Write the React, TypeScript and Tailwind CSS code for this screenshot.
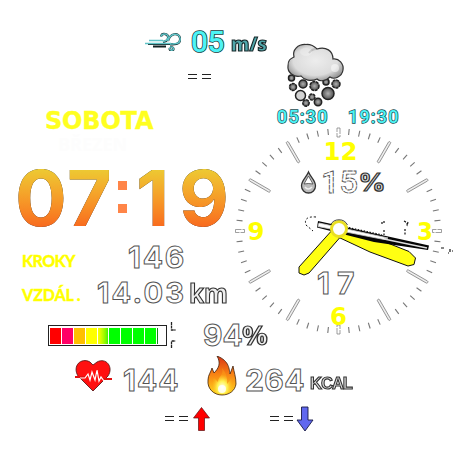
import React from "react";

const CX = 338.5;
const CY = 231;

const outline = "font-['Inter',sans-serif] font-bold text-white [-webkit-text-stroke:1px_#555]";
const lcd = "font-['Roboto',sans-serif] font-medium text-[#4df3f5] [paint-order:stroke]";

function WindIcon() {
  return (
    <svg className="h-[20px] w-[36px]" viewBox="145 31 36 20" fill="none">
      <g stroke="#102022" strokeWidth="2.2">
        <path d="M148 44H173M153 46.500H166" />
        <path d="M161 36.500c1-4 8-3 7 2q-1 3-5 3.500M168 41c2-8 11-9 12-3c1 6-4 6.500-10 6.500M170 47c5 0 4 4 1 3.500q-2-1-1-2.500" />
      </g>
      <g stroke="#5fc3c7" strokeWidth="1.5">
        <path d="M149 40.500H163M145 43.500H171" />
        <path d="M161 36.500c1-4 8-3 7 1.500q-1 3-5 3.500M168 41c2-8 11-9 12-3c1 6-4 6-10 6M170 47c5 0 4 4 1 3q-2-1-1-2" />
      </g>
    </svg>
  );
}

const hail = [
  [291.5, 78, 3], [293, 87, 3.5], [303, 84, 4], [314.5, 86, 4.5], [326, 82, 3], [336, 84, 4],
  [300.5, 95.5, 5], [312, 97, 3], [328, 93.5, 6], [306, 103, 3.2], [318, 102, 3.7],
];

function CloudIcon() {
  return (
    <svg className="h-[66px] w-[60px]" viewBox="286 42 60 66">
      <defs>
        <radialGradient id="cloud" cx="50%" cy="45%" r="62%">
          <stop offset="0" stopColor="#ededed" />
          <stop offset=".65" stopColor="#dcdcdc" />
          <stop offset="1" stopColor="#858585" />
        </radialGradient>
        <radialGradient id="hail">
          <stop offset="0" stopColor="#b0b0b0" />
          <stop offset="1" stopColor="#505050" />
        </radialGradient>
      </defs>
      {hail.map(([x, y, r], i) => (
        <circle key={i} cx={x} cy={y} r={r} fill={i === 6 ? "#d2d2d2" : "url(#hail)"} stroke="#222" strokeWidth="1.5" strokeDasharray={i % 2 ? "3 .7" : undefined} />
      ))}
      <path d="M294 57C292 50 298 44 306 44.500C312 44 315 47 317 49C326 46 333 51 333 59C339 58 344 64 343 70C342 77 334 80 330 77C326 81 320 82 317 79C311 82 304 80 301 76C294 78 287 72 288 66C288 60 290 59 294 57Z" fill="url(#cloud)" stroke="#333" strokeWidth="1.2" />
      <path d="M309 53q3-4 7-4" fill="none" stroke="#999" strokeWidth="2" opacity=".5" />
      <ellipse cx="335" cy="68" rx="4" ry="4" fill="#fff" opacity=".5" />
      <ellipse cx="306" cy="52" rx="6" ry="4" fill="#fff" opacity=".25" />
    </svg>
  );
}

function Dial() {
  return (
    <svg className="h-[216px] w-[222px] overflow-visible" viewBox="232 124 222 216">
      {Array.from({ length: 60 }, (_, i) => {
        const turn = `rotate(${i * 6} ${CX} ${CY})`;
        if (i % 15 === 0)
          return <rect key={i} x={CX - 1.5} y={CY - 103} width="3" height="9" fill="#fff" stroke="#777" strokeWidth=".7" strokeDasharray="9 1" transform={turn} />;
        if (i % 5 === 0)
          return <rect key={i} x={CX - 1.2} y={CY - 103} width="2.4" height="24" rx="1" fill="#eee" stroke="#888" strokeWidth=".8" transform={turn} />;
        return <path key={i} d={`M${CX} ${CY - 102.5}v6`} stroke="#777" strokeWidth="1.1" transform={turn} />;
      })}
      <g className="font-['DejaVu_Sans',sans-serif] font-bold" fill="#ffff00" fontSize="25">
        <text x="323.5" y="160" textLength="34" lengthAdjust="spacingAndGlyphs">12</text>
        <text x="417" y="240" textLength="16" lengthAdjust="spacingAndGlyphs">3</text>
        <text x="330" y="325" textLength="17" lengthAdjust="spacingAndGlyphs">6</text>
        <text x="247.5" y="240" textLength="17" lengthAdjust="spacingAndGlyphs">9</text>
      </g>
      <path d="M308.500 172C306 178 301.500 180 301.500 186a7 7 0 0 0 14 0C315.500 180 311 178 308.500 172Z" fill="#bbb" stroke="#333" strokeWidth="1.3" />
      <path d="M308.500 176L304 184q4-1 9 0Z" fill="#fff" stroke="#444" strokeWidth=".8" />
      <path d="M305 187q3 4 7 0" fill="none" stroke="#eee" strokeWidth="1.5" />
      <text x="321" y="193" className="font-['Roboto',sans-serif] font-medium" fontSize="31" fill="#fff" stroke="#555" strokeWidth=".9" strokeDasharray="5 .8" textLength="37" lengthAdjust="spacingAndGlyphs">15</text>
      <text x="358.5" y="191" className="font-['Inter',sans-serif] font-bold" fontSize="24" fill="#ddd" stroke="#333" strokeWidth="1.2" textLength="27" lengthAdjust="spacingAndGlyphs">%</text>
      <text x="317 337" y="294" className="font-['Inter',sans-serif] font-bold" fontSize="30" fill="#fff" stroke="#555" strokeWidth="1">17</text>
      <path d="M316 217q-13-1-10 8l7 6" fill="none" stroke="#111" strokeDasharray="2 2" />
      <path d="M382 222v3M384 221v3M384 230v5M404 221q4 2 3 5M405 229v7M408 222l-1 4" fill="none" stroke="#111" strokeWidth="1.2" strokeDasharray="2 1.5" />
      <path d="M441 248h3M450 249v3M448 253h1M452 251h1" stroke="#111" strokeWidth="1.2" />
      <g stroke="#111" strokeWidth="1" strokeLinejoin="round">
        <path d="M334 228L299 267L299 273L304 275L309 273L343 234Z" fill="#ffff12" />
        <path d="M343 227L375 238L409 251.500L415.500 258L414 264.500L408 266L370 252L338 237Z" fill="#ffff12" />
      </g>
      <path d="M318 221L429 245.500L428 250L374 242L317 227.500Z" fill="#050505" />
      <path d="M319 223L388 238L384 239.500L318 226.500Z" fill="#fff" stroke="#ccc" strokeWidth=".8" />
      <path d="M384 239L427 248" stroke="#ddd" strokeWidth="1.5" />
      <path d="M346 227l36 8" stroke="#111" strokeWidth="1.3" strokeDasharray="1.5 1.5" />
      <circle cx="339" cy="229" r="7.5" fill="#fff" stroke="#e9df24" strokeWidth="3" />
      <path d="M330.500 225a9.500 9.500 0 0 1 17 0" fill="none" stroke="#222" strokeWidth=".8" />
    </svg>
  );
}

function Battery() {
  const cells = ["bg-[#ff0000]", "bg-[#ff0066]", "bg-[#ffbf00]", "bg-[#ffff00]", "bg-linear-to-r from-[#ffff00] to-[#35f500]", "bg-[#00ff00]", "bg-[#00ff00]", "bg-[#00ff00]", "bg-[#00ff00]"];
  return (
    <div className="flex w-[128px] items-center">
      <div className="flex h-[21px] w-[119px] gap-px border border-[#222] pt-[2px] pr-[8px] pl-px">
        {cells.map((c, i) => <div key={i} className={`h-[16px] flex-1 ${c}`} />)}
        <div className="h-[16px] w-px bg-[#198019]" />
      </div>
      <svg className="ml-[3px] h-[28px] w-[6px] shrink-0" viewBox="0 0 6 28" fill="none" stroke="#222" strokeWidth="1.3">
        <path d="M1.500 1v8h4M1.500 27v-7h4" strokeDasharray="3 .6" />
      </svg>
    </div>
  );
}

function Heart() {
  return (
    <svg className="h-[32px] w-[37px]" viewBox="75 361 37 32">
      <path d="M93 392L78 377C72 367 81 358 90 363L93 366L97 363C106 358 114 368 108 377Z" fill="#ff1010" stroke="#4d1111" strokeWidth=".8" />
      <path d="M75 378h10M103 380h9" stroke="#e01010" strokeWidth="2" />
      <path d="M80 379h5l3-4 2 6 2-8 3 8 2-10 2 11 2-4 3 4h5" fill="none" stroke="#fff" strokeWidth="1.2" />
    </svg>
  );
}

function Flame() {
  return (
    <svg className="h-[40px] w-[30px]" viewBox="207 354 30 40">
      <defs>
        <linearGradient id="flame" x1="0" y1="0" x2="0" y2="1">
          <stop offset="0" stopColor="#d83416" />
          <stop offset=".45" stopColor="#f77f13" />
          <stop offset="1" stopColor="#ffd91d" />
        </linearGradient>
        <radialGradient id="core" cy="75%">
          <stop offset="0" stopColor="#fffff0" />
          <stop offset=".5" stopColor="#fff251" />
          <stop offset="1" stopColor="#ffb81a" stopOpacity=".3" />
        </radialGradient>
      </defs>
      <path d="M217 354C230 359 229 368 230 372L233 364C234 370 236 375 236 382C235 389 229 393 222 393C214 393 207 387 208 378C208 373 211 370 212 366L214 371C219 366 221 361 217 354Z" fill="url(#flame)" stroke="#40220c" strokeWidth=".8" />
      <path d="M222 366C224 374 218 374 218 380L214 376C210 384 213 392 222 392C232 392 234 385 231 377L227 382Q228 373 222 366Z" fill="url(#core)" />
      <circle cx="222" cy="387" r="4" fill="#fff" opacity=".8" />
    </svg>
  );
}

function Dashes() {
  return (
    <div className="flex h-[6px] w-[23px] justify-between">
      <i className="h-[5px] w-[9px] border-y border-[#222]" />
      <i className="h-[5px] w-[9px] border-y border-[#222]" />
    </div>
  );
}

function Digit({ children, className }: { children: string; className: string }) {
  return <span className={`block h-[60px] bg-linear-to-b from-[#eccb33] to-[#f8681e] bg-clip-text text-center text-transparent [filter:drop-shadow(.6px_.4px_0_#222)] ${className}`}>{children}</span>;
}

export default function App() {
  return (
    <main className="h-[454px] w-[454px] overflow-hidden bg-white whitespace-nowrap leading-none">
      <header className="flex h-[108px]">
        <div className="w-[286px] pt-[28px] pl-[145px]">
          <div className="flex h-[26px] items-center">
            <WindIcon />
            <span className={`ml-[10px] w-[37px] pt-[1px] text-[30px] tracking-[-.5px] [-webkit-text-stroke:1.6px_#123c40] ${lcd}`}>05</span>
            <span className="ml-[3px] origin-left scale-x-[.92] pt-[5px] font-['Open_Sans',sans-serif] text-[20px] font-extrabold text-[#50a7ab] [-webkit-text-stroke:1.2px_#152527]">m/s</span>
          </div>
          <div className="mt-[20px] ml-[43px]"><Dashes /></div>
        </div>
        <div className="pt-[42px]"><CloudIcon /></div>
      </header>

      <section className="flex h-[210px]">
        <div className="w-[232px] shrink-0">
          <h1 className="h-[27px] pl-[45px] font-['DejaVu_Sans',sans-serif] text-[24px] leading-[27px] font-bold tracking-[-.2px] text-[#ffff20] [-webkit-text-stroke:.4px_#ffff20]">SOBOTA</h1>
          <p className="h-[25px] pl-[58px] font-['Open_Sans',sans-serif] text-[18px] leading-[18px] font-bold text-[#fdfdfd]">BŘEZEN</p>
          <div className="flex h-[77px] pt-[8px] pl-[15px] font-['Inter',sans-serif] text-[77px] leading-[60px] font-bold">
            <Digit className="w-[50px]">0</Digit>
            <Digit className="w-[49px]">7</Digit>
            <div className="flex w-[15px] flex-col gap-[14px] pt-[13px] pl-[4px]">
              <i className="size-[9px] bg-[#ff8548]" />
              <i className="size-[9px] bg-[#ff8548]" />
            </div>
            <Digit className="w-[47px]">1</Digit>
            <Digit className="w-[56px]">9</Digit>
          </div>
          <div className="flex h-[39px] items-center pl-[22px]">
            <span className="w-[106px] pt-[8px] font-['Lato',sans-serif] text-[16px] font-black tracking-[-.6px] text-[#ffff00] [-webkit-text-stroke:.3px_#ffff00]">KROKY</span>
            <span className={`text-[30px] leading-[22px] tracking-[1.8px] ${outline}`}>146</span>
          </div>
          <div className="flex h-[32px] items-center pl-[22px]">
            <span className="w-[75px] pt-[5px] font-['Lato',sans-serif] text-[16px] font-black tracking-[-.1px] text-[#ffff00] [-webkit-text-stroke:.3px_#ffff00]">VZDÁL<span className="pl-[3px]">.</span></span>
            <span className={`w-[92px] text-[29px] tracking-[2.2px] ${outline}`}>14.03</span>
            <span className="origin-left scale-x-[.9] font-['Open_Sans',sans-serif] text-[27px] font-bold text-[#eee] [-webkit-text-stroke:1.2px_#333]">km</span>
          </div>
        </div>
        <div>
          <div className={`flex h-[16px] w-[222px] items-center pt-[2px] pl-[45px] text-[18px] tracking-[1.2px] [-webkit-text-stroke:1.4px_#174b50] ${lcd}`}>
            <span className="w-[71px]">05:30</span>
            <span>19:30</span>
          </div>
          <Dial />
        </div>
      </section>

      <section className="flex h-[34px] items-center pl-[48px]">
        <Battery />
        <span className={`ml-[27px] w-[39px] text-[30px] ${outline}`}>94</span>
        <span className="origin-left scale-x-[1.1] font-['Open_Sans',sans-serif] text-[26px] font-bold text-[#eee] [-webkit-text-stroke:1.2px_#333]">%</span>
      </section>

      <section className="flex h-[48px] items-center pl-[75px]">
        <Heart />
        <span className={`ml-[11px] w-[84px] pt-[8px] text-[30px] tracking-[1px] ${outline}`}>144</span>
        <Flame />
        <span className={`ml-[8px] w-[65px] pt-[7px] text-[30px] tracking-[.4px] ${outline}`}>264</span>
        <span className="origin-left scale-x-[.97] pt-[14px] font-['Liberation_Sans',sans-serif] text-[17px] font-bold tracking-[-1px] text-[#ddd] [-webkit-text-stroke:1.1px_#333]">KCAL</span>
      </section>

      <footer className="flex h-[38px] items-center pl-[165px]">
        <Dashes />
        <svg className="ml-[5px] h-[24px] w-[17px]" viewBox="0 0 17 24"><path d="M8.500 .5L16.500 11H11.500V23.500H5.500V11H.5Z" fill="#ff0000" stroke="#5a1010" strokeWidth=".7" /></svg>
        <div className="ml-[60px]"><Dashes /></div>
        <svg className="ml-[3px] h-[26px] w-[18px]" viewBox="0 0 18 26"><path d="M5.500 1H12V14H17L9 25L1 14H5.500Z" fill="#6068ef" stroke="#171a45" strokeWidth=".9" /></svg>
      </footer>
    </main>
  );
}
